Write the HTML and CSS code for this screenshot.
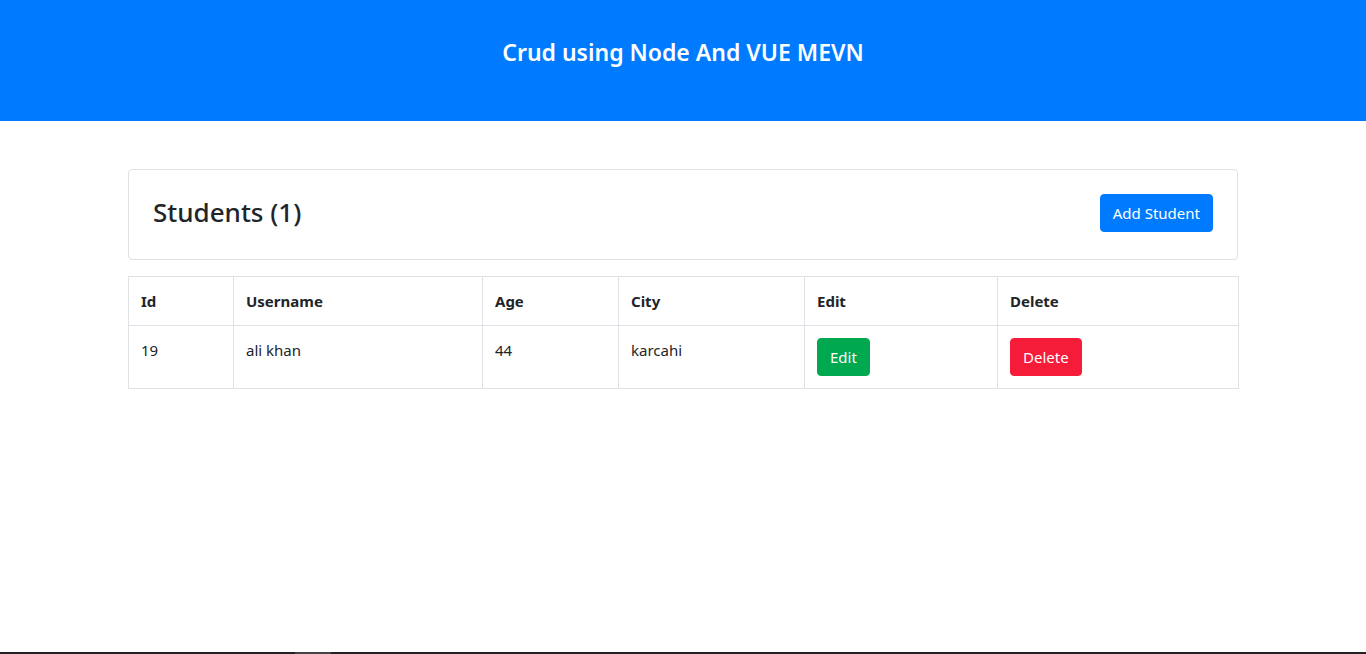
FILE: index.html
```html
<!DOCTYPE html>
<html lang="en">
<head>
<meta charset="utf-8">
<title>Crud using Node And VUE MEVN</title>
<link rel="stylesheet" href="styles.css">
</head>
<body>
<header class="topbar">
  <h1 class="topbar-title">Crud using Node And VUE MEVN</h1>
</header>
<main class="container">
  <section class="panel">
    <h3 class="panel-title">Students (1)</h3>
    <button class="btn btn-primary">Add Student</button>
  </section>
  <table class="grid">
    <thead>
      <tr>
        <th class="c-id">Id</th>
        <th class="c-user">Username</th>
        <th class="c-age">Age</th>
        <th class="c-city">City</th>
        <th class="c-edit">Edit</th>
        <th class="c-del">Delete</th>
      </tr>
    </thead>
    <tbody>
      <tr>
        <td>19</td>
        <td>ali khan</td>
        <td>44</td>
        <td>karcahi</td>
        <td><button class="btn btn-success">Edit</button></td>
        <td><button class="btn btn-danger">Delete</button></td>
      </tr>
    </tbody>
  </table>
</main>
<div class="taskbar"><span class="taskbar-mark"></span></div>
</body>
</html>
```
FILE: styles.css
```css
* { box-sizing: border-box; }
html, body { height: 100%; }
body {
  margin: 0;
  font-family: "Noto Sans", "Open Sans", sans-serif;
  font-size: 16px;
  line-height: 1.5;
  color: #212529;
  background: #fff;
  display: flex;
  flex-direction: column;
}
.topbar {
  background: #007bff;
  height: 121px;
  padding-top: 36px;
  text-align: center;
}
.topbar-title {
  margin: 0;
  color: #fff;
  font-size: 23px;
  font-weight: 600;
  line-height: 33px;
}
.container {
  width: 1110px;
  margin: 48px auto 0;
  flex: 1;
}
.panel {
  border: 1px solid #dee2e6;
  border-radius: 4px;
  padding: 24px;
  display: flex;
  justify-content: space-between;
  align-items: flex-start;
  margin-bottom: 16px;
  height: 91px;
}
.panel-title {
  margin: 0;
  font-size: 26px;
  font-weight: 500;
  line-height: 36px;
}
.btn {
  display: inline-block;
  font-family: inherit;
  font-size: 15px;
  line-height: 24px;
  height: 38px;
  padding: 6px 12px;
  border: 1px solid transparent;
  border-radius: 4px;
  color: #fff;
  cursor: pointer;
  vertical-align: top;
}
.btn-primary { background: #007bff; border-color: #007bff; }
.btn-success { background: #00a84f; border-color: #00a84f; }
.btn-danger { background: #f51c3a; border-color: #f51c3a; }
.grid {
  width: 1110px;
  border-collapse: collapse;
  table-layout: fixed;
}
.grid th, .grid td {
  border: 1px solid #dee2e6;
  padding: 12px;
  text-align: left;
  vertical-align: top;
  font-size: 15px;
  line-height: 24px;
}
.grid th { font-weight: 700; }
.c-id { width: 105px; }
.c-user { width: 249px; }
.c-age { width: 136px; }
.c-city { width: 186px; }
.c-edit { width: 193px; }
.c-del { width: 241px; }
.taskbar {
  height: 2px;
  background: #222;
  position: relative;
}
.taskbar-mark {
  position: absolute;
  left: 295px;
  top: 0;
  width: 36px;
  height: 2px;
  background: #444;
}
```
